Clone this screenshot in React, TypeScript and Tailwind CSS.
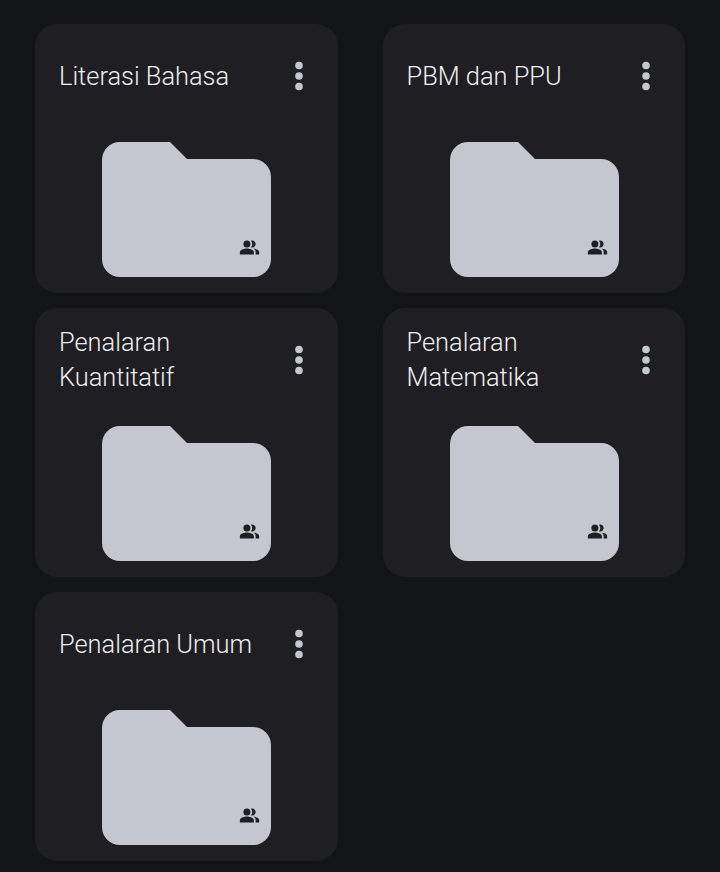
import { MdPeopleAlt } from 'react-icons/md';

const FOLDERS = [
  'Literasi Bahasa',
  'PBM dan PPU',
  'Penalaran Kuantitatif',
  'Penalaran Matematika',
  'Penalaran Umum',
];

function FolderCard({ name }: { name: string }) {
  return (
    <div className="h-[269px] rounded-[22px] bg-[#1f1f23] pl-6 pr-[35px] pt-[17px]">
      <div className="flex h-[70px] items-center justify-between">
        <h2 className="w-[205px] text-[25.4px] leading-[35px] font-light text-[#eeeef0]">{name}</h2>
        <svg width="8" height="30" viewBox="0 0 8 30" className="fill-[#c4c7ce]">
          <circle cx="4" cy="4.5" r="3.8" />
          <circle cx="4" cy="15" r="3.8" />
          <circle cx="4" cy="25.5" r="3.8" />
        </svg>
      </div>
      <div className="relative mt-[31px] ml-[43px] h-[135px] w-[169px]">
        <svg width="169" height="135" viewBox="0 0 169 135" className="fill-[#c4c7d0]">
          <path d="M18 0H68L85 17H151A18 18 0 0 1 169 35V117A18 18 0 0 1 151 135H18A18 18 0 0 1 0 117V18A18 18 0 0 1 18 0Z" />
        </svg>
        <MdPeopleAlt className="absolute right-[11px] bottom-[19px] text-[21px] text-[#1f1f23]" />
      </div>
    </div>
  );
}

export default function App() {
  return (
    <div className="min-h-[872px] bg-[#131417] px-[35px] pt-6 font-['Roboto',sans-serif]">
      <div className="grid grid-cols-2 gap-x-[45px] gap-y-[15px]">
        {FOLDERS.map((name) => (
          <FolderCard key={name} name={name} />
        ))}
      </div>
    </div>
  );
}
